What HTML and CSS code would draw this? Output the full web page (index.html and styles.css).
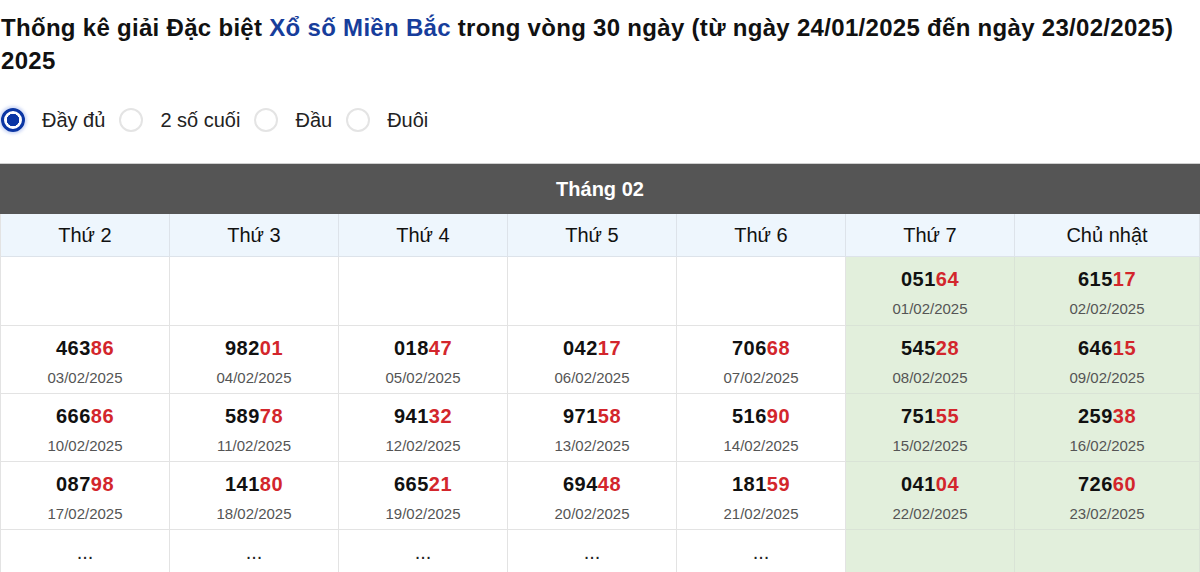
FILE: index.html
```html
<!DOCTYPE html>
<html lang="vi">
<head>
<meta charset="utf-8">
<title>Thống kê giải Đặc biệt</title>
<link rel="stylesheet" href="styles.css">
</head>
<body>
<h1 class="title">Thống kê giải Đặc biệt <a class="link" href="#">Xổ số Miền Bắc</a> trong vòng 30 ngày (từ ngày 24/01/2025 đến ngày 23/02/2025) 2025</h1>

<div class="options">
  <label class="opt"><span class="radio checked"></span>Đầy đủ</label>
  <label class="opt"><span class="radio"></span>2 số cuối</label>
  <label class="opt"><span class="radio"></span>Đầu</label>
  <label class="opt"><span class="radio"></span>Đuôi</label>
</div>

<div class="cal">
  <div class="month">Tháng 02</div>
  <div class="grid">
    <div class="dh">Thứ 2</div>
    <div class="dh">Thứ 3</div>
    <div class="dh">Thứ 4</div>
    <div class="dh">Thứ 5</div>
    <div class="dh">Thứ 6</div>
    <div class="dh">Thứ 7</div>
    <div class="dh">Chủ nhật</div>

    <div class="c first"></div>
    <div class="c first"></div>
    <div class="c first"></div>
    <div class="c first"></div>
    <div class="c first"></div>
    <div class="c first we"><div class="num">051<span class="r">64</span></div><div class="date">01/02/2025</div></div>
    <div class="c first we"><div class="num">615<span class="r">17</span></div><div class="date">02/02/2025</div></div>

    <div class="c"><div class="num">463<span class="r">86</span></div><div class="date">03/02/2025</div></div>
    <div class="c"><div class="num">982<span class="r">01</span></div><div class="date">04/02/2025</div></div>
    <div class="c"><div class="num">018<span class="r">47</span></div><div class="date">05/02/2025</div></div>
    <div class="c"><div class="num">042<span class="r">17</span></div><div class="date">06/02/2025</div></div>
    <div class="c"><div class="num">706<span class="r">68</span></div><div class="date">07/02/2025</div></div>
    <div class="c we"><div class="num">545<span class="r">28</span></div><div class="date">08/02/2025</div></div>
    <div class="c we"><div class="num">646<span class="r">15</span></div><div class="date">09/02/2025</div></div>

    <div class="c"><div class="num">666<span class="r">86</span></div><div class="date">10/02/2025</div></div>
    <div class="c"><div class="num">589<span class="r">78</span></div><div class="date">11/02/2025</div></div>
    <div class="c"><div class="num">941<span class="r">32</span></div><div class="date">12/02/2025</div></div>
    <div class="c"><div class="num">971<span class="r">58</span></div><div class="date">13/02/2025</div></div>
    <div class="c"><div class="num">516<span class="r">90</span></div><div class="date">14/02/2025</div></div>
    <div class="c we"><div class="num">751<span class="r">55</span></div><div class="date">15/02/2025</div></div>
    <div class="c we"><div class="num">259<span class="r">38</span></div><div class="date">16/02/2025</div></div>

    <div class="c"><div class="num">087<span class="r">98</span></div><div class="date">17/02/2025</div></div>
    <div class="c"><div class="num">141<span class="r">80</span></div><div class="date">18/02/2025</div></div>
    <div class="c"><div class="num">665<span class="r">21</span></div><div class="date">19/02/2025</div></div>
    <div class="c"><div class="num">694<span class="r">48</span></div><div class="date">20/02/2025</div></div>
    <div class="c"><div class="num">181<span class="r">59</span></div><div class="date">21/02/2025</div></div>
    <div class="c we"><div class="num">041<span class="r">04</span></div><div class="date">22/02/2025</div></div>
    <div class="c we"><div class="num">726<span class="r">60</span></div><div class="date">23/02/2025</div></div>

    <div class="c more">...</div>
    <div class="c more">...</div>
    <div class="c more">...</div>
    <div class="c more">...</div>
    <div class="c more">...</div>
    <div class="c more we"></div>
    <div class="c more we"></div>
  </div>
</div>
</body>
</html>
```

FILE: styles.css
```css
* { box-sizing: border-box; }

body {
  margin: 0;
  font-family: "Liberation Sans", Arial, sans-serif;
  color: #111;
  background: #fff;
}

.title {
  margin: 11px 0 0 1px;
  font-size: 24px;
  letter-spacing: 0.3px;
  line-height: 33px;
  font-weight: bold;
  color: #111;
}

.link {
  color: #173d9b;
  text-decoration: none;
}

.options {
  display: flex;
  align-items: center;
  gap: 14px;
  margin-top: 31px;
  padding-left: 1px;
  height: 24px;
  font-size: 20px;
  color: #222;
}

.opt {
  display: flex;
  align-items: center;
  gap: 17px;
}

.radio {
  width: 24px;
  height: 24px;
  border-radius: 50%;
  border: 2px solid #e4e4e4;
  background: #fff;
  display: inline-block;
}

.radio.checked {
  border: 3px solid #0b36a4;
  background: radial-gradient(circle, #0b36a4 0 6px, #fff 6.5px);
  box-shadow: 0 0 3px 2px rgba(120, 150, 230, 0.35);
}

.cal {
  margin-top: 31px;
  border-top: 1px solid #cfcfcf;
}

.month {
  height: 50px;
  background: #555555;
  color: #fff;
  font-size: 20px;
  font-weight: bold;
  display: flex;
  align-items: center;
  justify-content: center;
}

.grid {
  display: grid;
  grid-template-columns: repeat(6, 169px) 1fr;
  border-left: 1px solid #e3e3e3;
}

.dh {
  height: 43px;
  background: #eef6fd;
  border-right: 1px solid #dde3ea;
  border-bottom: 1px solid #dde3ea;
  font-size: 20px;
  color: #111;
  display: flex;
  align-items: center;
  justify-content: center;
}

.c {
  height: 68px;
  border-right: 1px solid #e3e3e3;
  border-bottom: 1px solid #e3e3e3;
  text-align: center;
  padding-top: 10px;
}

.c.first {
  height: 69px;
}

.c.we {
  background: #e2efdc;
  border-color: #d9e3d6;
}

.num {
  font-size: 20px;
  line-height: 24px;
  font-weight: bold;
  letter-spacing: 0.5px;
  color: #111;
}

.r {
  color: #d3262c;
}

.date {
  margin-top: 7px;
  font-size: 15px;
  line-height: 22px;
  color: #555;
}

.c.more {
  padding-top: 10px;
  font-size: 20px;
  line-height: 24px;
  color: #222;
}
```
